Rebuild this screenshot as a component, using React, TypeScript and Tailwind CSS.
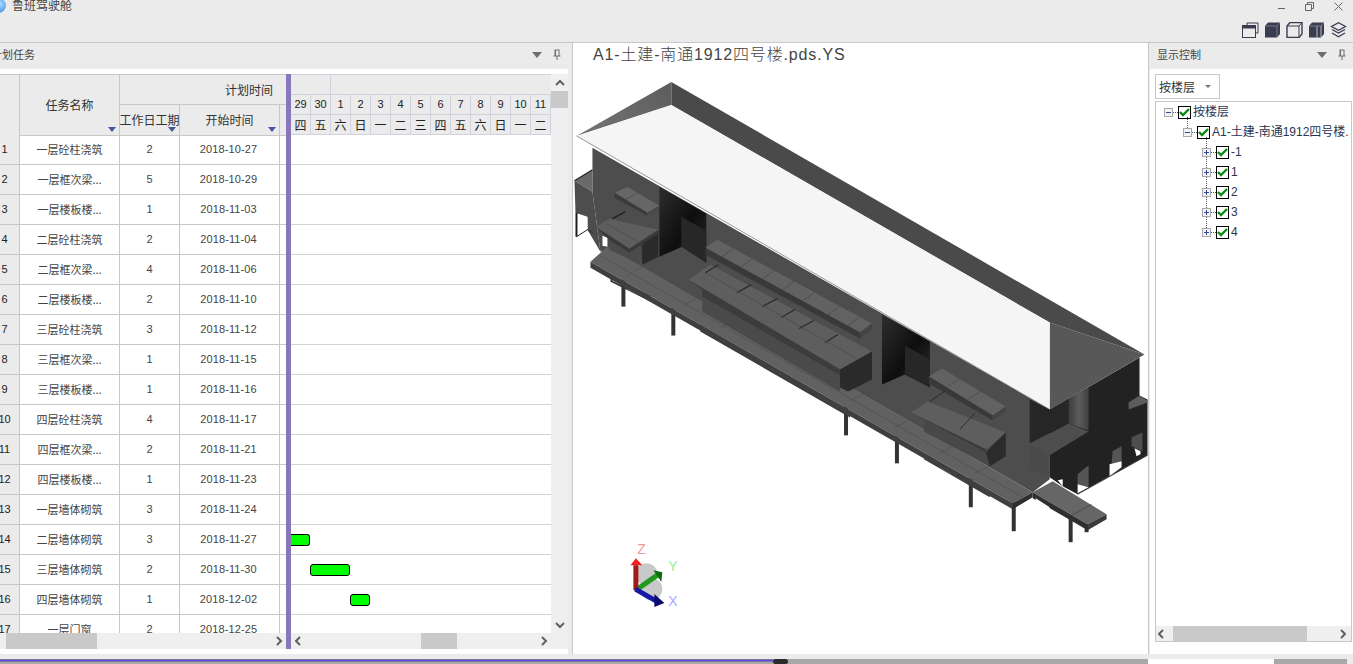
const tasks: [string, number, string][] = [
  ['一层砼柱浇筑', 2, '2018-10-27'],
  ['一层框次梁...', 5, '2018-10-29'],
  ['一层楼板楼...', 1, '2018-11-03'],
  ['二层砼柱浇筑', 2, '2018-11-04'],
  ['二层框次梁...', 4, '2018-11-06'],
  ['二层楼板楼...', 2, '2018-11-10'],
  ['三层砼柱浇筑', 3, '2018-11-12'],
  ['三层框次梁...', 1, '2018-11-15'],
  ['三层楼板楼...', 1, '2018-11-16'],
  ['四层砼柱浇筑', 4, '2018-11-17'],
  ['四层框次梁...', 2, '2018-11-21'],
  ['四层楼板楼...', 1, '2018-11-23'],
  ['一层墙体砌筑', 3, '2018-11-24'],
  ['二层墙体砌筑', 3, '2018-11-27'],
  ['三层墙体砌筑', 2, '2018-11-30'],
  ['四层墙体砌筑', 1, '2018-12-02'],
  ['一层门窗', 2, '2018-12-25'],
];

const dates = [
  ['29', '四'], ['30', '五'], ['1', '六'], ['2', '日'], ['3', '一'], ['4', '二'], ['5', '三'],
  ['6', '四'], ['7', '五'], ['8', '六'], ['9', '日'], ['10', '一'], ['11', '二'],
];

const FONT = '"Noto Sans CJK SC", sans-serif';

function Chevron({ dir }: { dir: 'l' | 'r' | 'u' | 'd' }) {
  const d = { l: 'M6 1 L2 5 L6 9', r: 'M3 1 L7 5 L3 9', u: 'M1 7 L5 3 L9 7', d: 'M1 3 L5 7 L9 3' }[dir];
  return (
    <svg width="10" height="10" viewBox="0 0 10 10" className="block">
      <path d={d} fill="none" stroke="#606060" strokeWidth="2" />
    </svg>
  );
}

function PanelTools() {
  return (
    <div className="flex items-center gap-[11px]">
      <svg width="10" height="6" viewBox="0 0 10 6"><path d="M0 0 H10 L5 6 Z" fill="#6e6e6e" /></svg>
      <svg width="8" height="11" viewBox="0 0 8 11">
        <path d="M1.5 .5 H6.5 V6.5 H7.5 V7.5 H4.5 V11 H3.5 V7.5 H.5 V6.5 H1.5 Z M3 1.5 V6.5 H5.5 V1.5 Z" fill="#6e6e6e" />
      </svg>
    </div>
  );
}

function SortMark() {
  return (
    <svg width="8" height="5" viewBox="0 0 8 5" className="absolute right-[3px] bottom-[3px]">
      <path d="M0 0 H8 L4 5 Z" fill="#46569c" />
    </svg>
  );
}

function Check() {
  return (
    <span className="flex h-[13px] w-[13px] shrink-0 items-center justify-center border border-black bg-white">
      <svg width="11" height="10" viewBox="0 0 11 10">
        <path d="M1 5 L4 8 L10 2" fill="none" stroke="#0a8a12" strokeWidth="2.4" />
      </svg>
    </span>
  );
}

function Expander({ open }: { open?: boolean }) {
  return (
    <span className="relative flex h-[9px] w-[9px] shrink-0 items-center justify-center border border-[#a8a8a8] bg-[#f4f4f4]">
      <span className="h-px w-[5px] bg-[#2c4a9a]" />
      {!open && <span className="absolute h-[5px] w-px bg-[#2c4a9a]" />}
    </span>
  );
}

function TreeRow({ indent, open, label, up }: { indent: string; open?: boolean; label: string; up?: boolean }) {
  return (
    <div className={`relative flex h-5 items-center whitespace-nowrap ${indent}`}>
      {up && <span className="absolute -mt-[15px] ml-[4px] h-[15px] border-l border-dotted border-[#555]" />}
      <Expander open={open} />
      <span className="w-[5px] shrink-0 border-t border-dotted border-[#555]" />
      <Check />
      <span className="ml-[2px] font-['Liberation_Sans','Noto_Sans_CJK_SC',sans-serif] text-[12px] leading-none text-[#2a3550]">{label}</span>
    </div>
  );
}

function ToolIcon({ kind }: { kind: number }) {
  const c = '#3a3c50';
  if (kind === 0)
    return (
      <svg width="17" height="16" viewBox="0 0 17 16">
        <path d="M5 3 V1 H16 V11 H14" fill="none" stroke={c} />
        <rect x=".5" y="3.5" width="13" height="12" fill="none" stroke={c} />
        <rect x="1" y="4" width="12" height="2.5" fill={c} />
      </svg>
    );
  if (kind === 1)
    return (
      <svg width="17" height="16" viewBox="0 0 17 16">
        <path d="M1 4 L4 .5 H16 V12 L13 15.5 H1 Z" fill={c} />
        <path d="M1.5 4 H13 V15 M13 4 L16 .8" fill="none" stroke="#8d8fa0" strokeWidth=".7" />
      </svg>
    );
  if (kind === 2)
    return (
      <svg width="17" height="16" viewBox="0 0 17 16">
        <path d="M1 4 L4 .5 H16 V12 L13 15.5 H1 Z" fill="none" stroke={c} strokeWidth="1.4" />
        <path d="M1 4 H13 V15.5 M13 4 L16 .5" fill="none" stroke={c} strokeWidth="1" />
      </svg>
    );
  if (kind === 3)
    return (
      <svg width="17" height="16" viewBox="0 0 17 16">
        <path d="M1 4 L4 .5 H16 V12 L13 15.5 H1 Z" fill={c} />
        <path d="M9 4 V15.5 M13 4 V15" stroke="#d8d8de" strokeWidth=".8" />
        <path d="M1.5 4 H13 L16 .8" fill="none" stroke="#9a9cac" strokeWidth=".7" />
      </svg>
    );
  return (
    <svg width="17" height="16" viewBox="0 0 17 16">
      <g fill="none" stroke={c} strokeWidth="1.3">
        <path d="M8.5 .8 L15.5 4.5 L8.5 8.2 L1.5 4.5 Z" />
        <path d="M2 7.5 L8.5 11 L15 7.5" />
        <path d="M2 11 L8.5 14.8 L15 11" />
      </g>
    </svg>
  );
}

function Building() {
  const legs = [
    [623, 278, 307], [673, 306, 336], [846, 405, 436], [897, 435, 464],
    [971, 478, 508], [1014, 503, 532], [1071, 517, 543], [1087, 525, 533],
  ];
  return (
    <svg viewBox="573 66 575 589" className="block h-[589px] w-[575px]">
      <defs>
        <linearGradient id="hip" x1="0" y1="1" x2="1" y2="0">
          <stop offset="0" stopColor="#757575" />
          <stop offset="1" stopColor="#5c5c5c" />
        </linearGradient>
        <linearGradient id="shaft" x1="0" y1="0" x2="1" y2="1">
          <stop offset="0" stopColor="#2e2e2e" />
          <stop offset=".55" stopColor="#0e0e0e" />
          <stop offset="1" stopColor="#2c2c2c" />
        </linearGradient>
        <linearGradient id="recess" x1="0" y1="0" x2="1" y2="0">
          <stop offset="0" stopColor="#3c3c3c" />
          <stop offset=".5" stopColor="#5c5c5c" />
          <stop offset="1" stopColor="#404040" />
        </linearGradient>
      </defs>

      {legs.map(([x, a, b]) => (
        <rect key={x} x={x - 2} y={a} width="4" height={b - a} fill="#333" />
      ))}

      {/* left wing below roof */}
      <path d="M574 181 L592 170 V192 Z" fill="#6a6a6a" />
      <path d="M574 181 L592 192 L600 252 L587 230 V217 L575 213 Z" fill="#4d4d4d" />
      <path d="M574 181 L592 170" stroke="#222" strokeWidth="1.2" />
      <path d="M577 215 L587 218 V229 L576 237 Z" fill="#fff" />
      <rect x="575" y="213" width="2" height="24" fill="#1e1e1e" />
      <path d="M576 237 L587 230 L592 233" stroke="#222" fill="none" />

      {/* long wall */}
      <path d="M592 148 L1050 410 V480 L1033 493 L610 250 L600 252 L592 192 Z" fill="#4d4d4d" />
      <path d="M602 236 L607 238 V247 L602 246 Z" fill="#fff" />

      {/* under deck beams */}
      <path d="M610 276 L650 296 V302 L610 282 Z" fill="#3a3a3a" />
      <path d="M612 277 L622 283 L620 285 L612 281 Z M628 287 L642 294 L640 296 L628 290 Z" fill="#fff" />
      <path d="M700 325 L850 412 V418 L700 332 Z" fill="#3b3b3b" />
      <path d="M719 337 L733 345 L732 347 L719 340 Z M737 348 L750 355 L749 358 L737 351 Z M762 362 L775 370 L774 372 L762 365 Z" fill="#fff" />
      <path d="M924 455 L990 494 V498 L924 460 Z" fill="#3a3a3a" />
      <path d="M940 464 L954 473 L952 475 L940 468 Z M961 477 L968 481 L967 483 L961 480 Z" fill="#fff" />

      {/* deck */}
      <path d="M590 262 L607 247 L1033 493 L1013 504 Z" fill="#616161" />
      <path d="M590 262 L1013 504 V510 L590 268 Z" fill="#3f3f3f" />
      <path d="M1013 504 L1033 493 V498 L1013 510 Z" fill="#2e2e2e" />

      {/* right end */}
      <path d="M1050 410 L1140 358 V396 L1148 400 V456 L1078 495 L1063 487 L1050 478 V455 Z" fill="#222" />
      <path d="M1030 400 L1050 410 L1069 399 V424 L1030 444 Z" fill="#262626" />
      <path d="M1069 399 L1089 388 V431 L1069 424 Z" fill="url(#recess)" />
      <path d="M1030 445 L1069 424 L1089 432 L1050 456 Z" fill="#4e4e4e" />
      <path d="M1030 445 L1050 456 V478 L1030 470 Z" fill="#4a4a4a" />
      <path d="M1078 475 L1089 466 V488 L1078 485 Z" fill="#555" />
      <path d="M1078 485 L1089 488 L1078 494 Z" fill="#fff" />
      <path d="M1113 452 L1122 447 V462 L1112 465 Z" fill="#555" />
      <path d="M1110 465 L1122 462 V468 L1110 477 Z" fill="#fff" />
      <path d="M1132 438 L1143 433 V452 L1132 447 Z" fill="#4e4e4e" />
      <path d="M1135 449 L1141 452 V455 L1137 457 Z" fill="#fff" />
      <path d="M1058 481 L1063 480 V487 Z" fill="#fff" />
      <path d="M1129 403 L1140 396 L1148 401 V403 L1129 410 Z" fill="#5c5c5c" />
      <path d="M1078 495 L1148 456" stroke="#444" fill="none" />

      {/* end ramp */}
      <path d="M1033 493 L1053 482 L1107 515 L1088 525 Z" fill="#666" />
      <path d="M1033 493 L1088 525 V531 L1033 499 Z" fill="#2f2f2f" />
      <path d="M1088 525 L1107 515 V520 L1088 531 Z" fill="#3a3a3a" />
      <path d="M1036 499 L1050 508 L1048 510 L1036 503 Z" fill="#fff" />
      <path d="M1072 516 L1092 505" stroke="#3e3e3e" strokeWidth=".6" />

      {/* deck joints */}
      <g stroke="#4a4a4a" strokeWidth=".6" fill="none">
        <path d="M600 256 L1023 498" />
        <path d="M625 277 L643 266 M683 306 L700 296 M720 328 L738 318 M760 350 L778 340 M800 373 L818 363 M850 402 L868 392 M895 428 L915 417 M940 454 L958 444 M975 474 L995 464" />
      </g>

      {/* shafts */}
      <path d="M659 187 L706 214 V263 L682 247 L659 257 Z" fill="url(#shaft)" />
      <path d="M681 217 L706 231 V263 L681 247 Z" fill="#272727" />
      <path d="M882 315 L930 342 V388 L905 375 L882 385 Z" fill="url(#shaft)" />
      <path d="M905 346 L930 360 V388 L905 374 Z" fill="#272727" />

      {/* left balconies */}
      <path d="M614 193 L627 187 L659 206 L647 213 Z" fill="#666" />
      <path d="M614 193 L647 213 V216 L614 198 Z" fill="#3b3b3b" />
      <path d="M647 213 L659 206 V209 L647 216 Z" fill="#4a4a4a" />
      <path d="M625 200 L637 193" stroke="#444" strokeWidth=".6" />
      <path d="M612 219 L625 212" stroke="#1e1e1e" strokeWidth="1.4" />
      <path d="M609 232 L641 250 V265 L609 250 Z" fill="#4b4b4b" />
      <path d="M641 243 L658 232 V257 L642 265 Z" fill="#2a2a2a" />
      <path d="M595 227 L609 219 L658 230 L629 249 Z" fill="#5e5e5e" />
      <path d="M595 227 L629 249 V253 L609 240 Z" fill="#383838" />
      <path d="M629 249 L658 230 V234 L629 253 Z" fill="#3a3a3a" />
      <path d="M606 224 L644 246" stroke="#434343" strokeWidth=".6" />

      {/* central upper balcony */}
      <path d="M705 248 L717 240 L872 324 L860 333 Z" fill="#626262" />
      <path d="M705 248 L860 333 V339 L705 255 Z" fill="#393939" />
      <path d="M860 333 L872 324 V330 L860 339 Z" fill="#444" />
      <g stroke="#444" strokeWidth=".7">
        <path d="M722 257 L733 249 M741 267 L752 259 M763 279 L774 271 M783 290 L794 282 M803 301 L814 293 M828 315 L839 307 M848 326 L859 318" />
      </g>

      {/* central lower balcony */}
      <path d="M688 280 L710 265 L872 352 L840 370 Z" fill="#5e5e5e" />
      <path d="M688 280 L840 370 L840 376 L702 297 V290 Z" fill="#3c3c3c" />
      <path d="M702 297 L840 376 V392 L702 312 Z" fill="#4a4a4a" />
      <path d="M840 370 L872 352 V380 L848 392 L840 388 Z" fill="#2a2a2a" />
      <g stroke="#2a2a2a" strokeWidth="1.2">
        <path d="M705 273 L718 265 M737 293 L751 285 M762 307 L777 299 M781 318 L795 310 M799 329 L814 321 M825 343 L838 335" />
      </g>
      <path d="M705 273 L855 358" stroke="#444" strokeWidth=".6" />

      {/* right balconies */}
      <path d="M929 377 L942 369 L1006 407 L993 416 Z" fill="#626262" />
      <path d="M929 377 L993 416 V421 L929 384 Z" fill="#393939" />
      <path d="M993 416 L1006 407 V412 L993 421 Z" fill="#444" />
      <path d="M947 387 L960 379 M968 400 L981 392" stroke="#444" strokeWidth=".6" />
      <path d="M911 413 L928 402 L1006 433 L990 447 L986 450 Z" fill="#5e5e5e" />
      <path d="M911 413 L986 450 V453 L924 420 Z" fill="#3a3a3a" />
      <path d="M924 420 L986 453 L990 467 L924 432 Z" fill="#484848" />
      <path d="M986 453 L1006 433 V457 L990 467 Z" fill="#2b2b2b" />
      <path d="M930 402 L946 391 M960 430 L975 414" stroke="#2a2a2a" strokeWidth="1" />

      {/* roof */}
      <path d="M671 82 L1145 355 L1050 323 L671 105 Z" fill="#4a4a4a" />
      <path d="M1050 323 L1145 355 L1050 410 Z" fill="#585858" />
      <path d="M576 136 L671 82 L671 105 Z" fill="url(#hip)" />
      <path d="M576 136 L671 105 L1050 323 V410 Z" fill="#f5f5f5" />
      <path d="M576 136 L1050 410" stroke="#333" strokeWidth=".5" fill="none" />

      {/* axis */}
      <circle cx="646" cy="575" r="11" fill="#c9c9c9" />
      <circle cx="651" cy="590" r="11" fill="#c9c9c9" />
      <path d="M637 590 L657 576" stroke="#1f9a1f" strokeWidth="5" />
      <path d="M653 571 L662 573 L661 583 Z" fill="#0e6e0e" />
      <rect x="633" y="566" width="5" height="25" fill="#a01c1c" />
      <path d="M630 566 L635.5 559 L642 566 Z" fill="#ee2222" />
      <path d="M635 590 L656 602" stroke="#1616a8" strokeWidth="5" />
      <path d="M654 595 L664 604 L654 608 Z" fill="#0a0a70" />
      <g fontFamily='"Liberation Sans", sans-serif' fontSize="14">
        <text x="637" y="555" fill="#f29a9a">Z</text>
        <text x="668" y="572" fill="#98ee98">Y</text>
        <text x="668" y="607" fill="#a8a8ff">X</text>
      </g>
    </svg>
  );
}

export default function App() {
  return (
    <div className="flex h-[664px] w-[1353px] flex-col overflow-hidden bg-[#ebebeb] text-[#333]" style={{ fontFamily: FONT }}>
      {/* title bar */}
      <div className="h-[43px] shrink-0 overflow-hidden border-b border-[#c8c8c8]">
        <div className="-mt-[6px] flex h-[22px] items-center justify-between pr-[10px]">
          <div className="flex items-center">
            <span className="-ml-[9px] h-[15px] w-[15px] rounded-full bg-[radial-gradient(circle_at_60%_40%,#a8dcff,#1e78d8)]" />
            <span className="ml-[6px] text-[12px] text-[#444]">鲁班驾驶舱</span>
          </div>
          <div className="mt-[2px] flex items-center gap-[20px]">
            <span className="mt-[5px] h-px w-[7px] bg-[#666]" />
            <svg width="9" height="9" viewBox="0 0 9 9"><path d="M2.5 2.5 V.5 H8.5 V6.5 H6.5 M.5 2.5 H6.5 V8.5 H.5 Z" fill="none" stroke="#666" /></svg>
            <svg width="9" height="9" viewBox="0 0 9 9"><path d="M.5 .5 L8.5 8.5 M8.5 .5 L.5 8.5" stroke="#666" /></svg>
          </div>
        </div>
        <div className="flex justify-end gap-[5px] pt-[6px] pr-[6px]">
          {[0, 1, 2, 3, 4].map((k) => <ToolIcon key={k} kind={k} />)}
        </div>
      </div>

      <div className="flex h-[611px] shrink-0">
        {/* plan panel */}
        <div className="flex w-[568px] shrink-0 flex-col">
          <div className="flex h-[26px] shrink-0 items-center justify-between pr-[7px] pb-[3px]">
            <span className="-ml-[9px] text-[11px] text-[#444]">计划任务</span>
            <PanelTools />
          </div>
          <div className="flex-1 bg-white pt-[5px]">
            <div className="flex h-[575px]">
              <div className="flex w-[286px] shrink-0 flex-col">
                <div className="h-[559px] overflow-hidden">
                  <div className="grid h-[61px] grid-cols-[20px_100px_60px_100px_6px] grid-rows-[30px_31px] border-t border-[#c8c8c8] bg-[#ebebeb] text-[12px] text-[#333]">
                    <div className="row-span-2 border-r border-b border-[#c8c8c8]" />
                    <div className="relative row-span-2 flex items-center justify-center border-r border-b border-[#c8c8c8]">
                      任务名称
                      <SortMark />
                    </div>
                    <div className="col-span-3 flex items-center justify-end border-b border-[#c8c8c8] pr-[13px]">计划时间</div>
                    <div className="relative flex items-center justify-center border-r border-b border-[#c8c8c8] whitespace-nowrap">
                      工作日工期
                      <SortMark />
                    </div>
                    <div className="relative flex items-center justify-center border-r border-b border-[#c8c8c8]">
                      开始时间
                      <SortMark />
                    </div>
                    <div className="border-b border-[#c8c8c8]" />
                  </div>
                  {tasks.map(([name, days, start], i) => (
                    <div key={i} className="grid h-[30px] grid-cols-[20px_100px_60px_100px_6px] border-b border-[#c8c8c8] text-[11px] text-[#444]">
                      <div className="border-r border-[#c8c8c8] bg-[#ebebeb]">
                        <div className="flex h-full w-[9px] items-center justify-center font-['Liberation_Sans',sans-serif] text-[#222]">{i + 1}</div>
                      </div>
                      <div className="flex items-center justify-center border-r border-[#c8c8c8]">{name}</div>
                      <div className="flex items-center justify-center border-r border-[#c8c8c8] font-['Liberation_Sans',sans-serif]">{days}</div>
                      <div className="flex items-center justify-center border-r border-[#c8c8c8] pr-[2px] font-['Liberation_Sans',sans-serif] tracking-[0.1px]">{start}</div>
                      <div />
                    </div>
                  ))}
                </div>
                <div className="flex h-4 items-center bg-[#efefef]">
                  <div className="ml-[6px] h-4 w-[91px] bg-[#c9c9c9]" />
                  <div className="ml-auto mr-[2px]"><Chevron dir="r" /></div>
                </div>
              </div>

              <div className="w-[5px] shrink-0 bg-[#8878bb]" />

              <div className="flex w-[277px] shrink-0 flex-col">
                <div className="flex h-[559px]">
                  <div className="w-[260px] shrink-0 overflow-hidden">
                    <div className="h-[61px] border-t border-[#d2d2de] bg-[#ebebeb] text-[11px] text-[#222]">
                      <div className="flex h-5 border-b border-[#d2d2de]">
                        <div className="w-[40px] border-r border-[#d2d2de]" />
                      </div>
                      <div className="flex h-5 border-b border-[#d2d2de]">
                        {dates.map(([d], i) => (
                          <div key={i} className="flex w-5 items-center justify-center border-r border-[#d2d2de] font-['Liberation_Sans',sans-serif]">{d}</div>
                        ))}
                      </div>
                      <div className="flex h-5 border-b border-[#d2d2de]">
                        {dates.map(([, w], i) => (
                          <div key={i} className="flex w-5 items-center justify-center border-r border-[#d2d2de] text-[12px]">{w}</div>
                        ))}
                      </div>
                    </div>
                    {tasks.map((_, i) => (
                      <div key={i} className="flex h-[30px] items-center border-b border-[#d2d2d2]">
                        {i === 13 && <div className="h-[12px] w-[19px] rounded-r-[3px] border border-l-0 border-black bg-[#00ff00]" />}
                        {i === 14 && <div className="ml-[19px] h-[12px] w-[40px] rounded-[3px] border border-black bg-[#00ff00]" />}
                        {i === 15 && <div className="ml-[59px] h-[12px] w-[20px] rounded-[3px] border border-black bg-[#00ff00]" />}
                      </div>
                    ))}
                  </div>
                  <div className="flex w-[17px] shrink-0 flex-col items-center bg-[#efefef]">
                    <div className="flex h-[17px] items-center justify-center"><Chevron dir="u" /></div>
                    <div className="h-[17px] w-full bg-[#c9c9c9]" />
                    <div className="mt-auto mb-[3px]"><Chevron dir="d" /></div>
                  </div>
                </div>
                <div className="flex h-4 items-center bg-[#efefef] pr-[19px] pl-[3px]">
                  <Chevron dir="l" />
                  <div className="ml-[117px] h-4 w-[36px] bg-[#c9c9c9]" />
                  <div className="ml-auto"><Chevron dir="r" /></div>
                </div>
              </div>
            </div>
          </div>
        </div>

        <div className="w-[5px] shrink-0 border-r border-[#c8c8c8]" />

        {/* model viewer */}
        <div className="flex w-[575px] shrink-0 flex-col overflow-hidden bg-white">
          <div className="h-[23px] shrink-0 pt-[2px] pl-[20px] font-['Liberation_Sans','Noto_Sans_CJK_SC',sans-serif] text-[16px] leading-[20px] font-light tracking-[0.85px] whitespace-nowrap text-[#444]">
            A1-土建-南通1912四号楼.pds.YS
          </div>
          <Building />
        </div>

        <div className="w-[2px] shrink-0 border-l border-[#c8c8c8]" />

        {/* display panel */}
        <div className="flex min-w-0 flex-1 flex-col">
          <div className="flex h-[26px] shrink-0 items-center justify-between px-[7px] pb-[3px]">
            <span className="text-[11px] text-[#444]">显示控制</span>
            <PanelTools />
          </div>
          <div className="flex-1 bg-white pt-[5px] pr-px pl-[5px]">
            <div className="flex h-[25px] w-[65px] items-center justify-between border border-[#c8c8c8] pr-[8px] pl-[3px] text-[12px] text-[#333]">
              按楼层
              <svg width="6" height="3" viewBox="0 0 6 3"><path d="M0 0 H6 L3 3 Z" fill="#777" /></svg>
            </div>
            <div className="mt-[2px] flex h-[541px] flex-col overflow-hidden border border-[#c8c8c8]">
              <div className="flex-1 overflow-hidden">
                <TreeRow indent="pl-[8px]" open label="按楼层" />
                <TreeRow indent="pl-[27px]" open label="A1-土建-南通1912四号楼." up />
                <TreeRow indent="pl-[46px]" label="-1" up />
                <TreeRow indent="pl-[46px]" label="1" up />
                <TreeRow indent="pl-[46px]" label="2" up />
                <TreeRow indent="pl-[46px]" label="3" up />
                <TreeRow indent="pl-[46px]" label="4" up />
              </div>
              <div className="flex h-[15px] shrink-0 items-center bg-[#efefef] pr-[3px] pl-[1px]">
                <Chevron dir="l" />
                <div className="ml-[6px] h-[15px] w-[134px] bg-[#c9c9c9]" />
                <div className="ml-auto"><Chevron dir="r" /></div>
              </div>
            </div>
          </div>
        </div>
      </div>

      {/* bottom progress */}
      <div className="mt-[5px] flex h-[5px] w-[1347px] shrink-0 items-start bg-[#a8a8a8]">
        <div className="h-[3px] w-[773px] border-y border-[#7a7a9a] bg-[#6a3cf0]" />
        <div className="h-[5px] w-[15px] rounded-full bg-[#2a2a2e]" />
        <div className="ml-[360px] h-[5px] w-[126px] bg-white" />
      </div>
    </div>
  );
}
